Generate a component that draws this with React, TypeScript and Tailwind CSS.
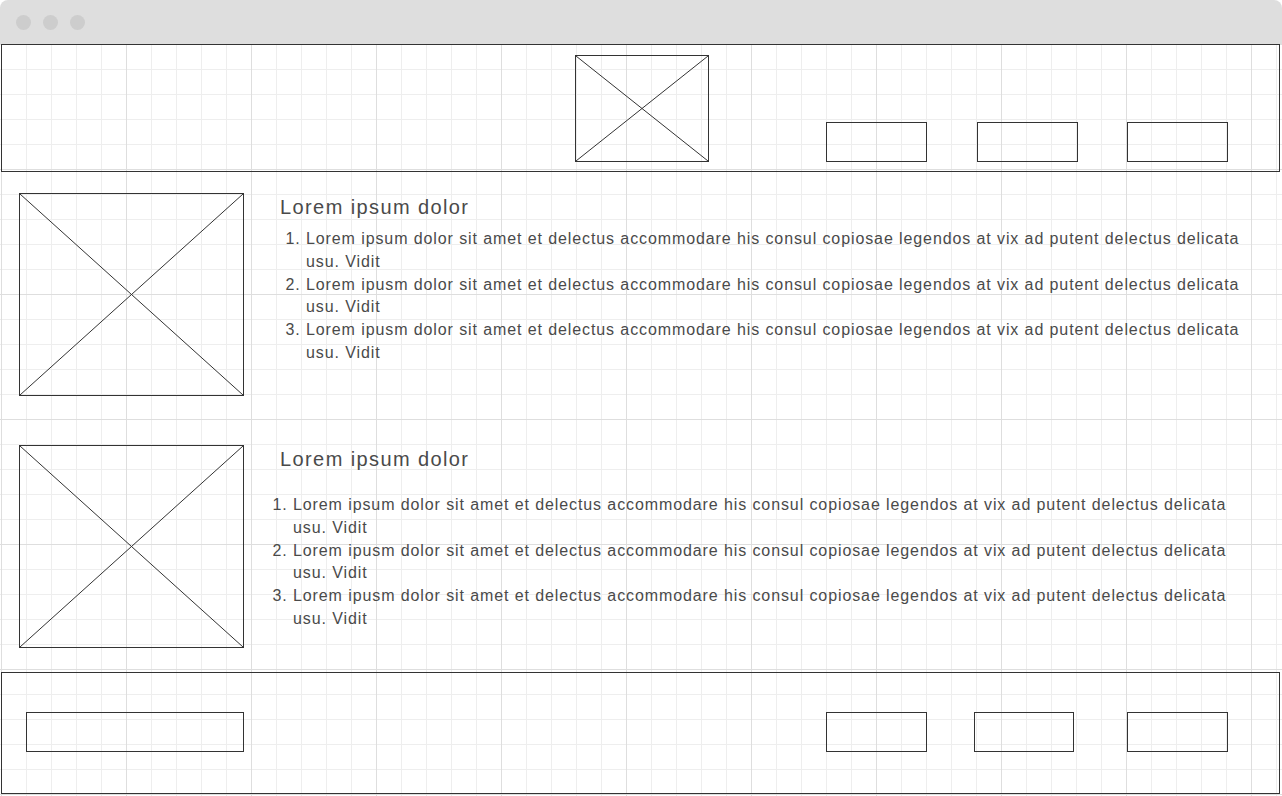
import React from "react";

function Placeholder({ className }: { className: string }) {
  return (
    <div className={"relative border border-[#333333] shrink-0 " + className}>
      <svg className="absolute inset-0 w-full h-full" preserveAspectRatio="none" viewBox="0 0 100 100">
        <line x1="0" y1="0" x2="100" y2="100" stroke="#333" strokeWidth="1" vectorEffect="non-scaling-stroke" />
        <line x1="100" y1="0" x2="0" y2="100" stroke="#333" strokeWidth="1" vectorEffect="non-scaling-stroke" />
      </svg>
    </div>
  );
}

function Box({ className }: { className: string }) {
  return <div className={"border border-[#333333] h-[40px] shrink-0 " + className} />;
}

const ITEMS = [
  "Lorem ipsum dolor sit amet et delectus accommodare his consul copiosae legendos at vix ad putent delectus delicata usu. Vidit",
  "Lorem ipusm dolor sit amet et delectus accommodare his consul copiosae legendos at vix ad putent delectus delicata usu. Vidit",
  "Lorem ipusm dolor sit amet et delectus accommodare his consul copiosae legendos at vix ad putent delectus delicata usu. Vidit",
];

export default function App() {
  return (
    <div className="w-[1282px] h-[796px] bg-white overflow-hidden flex flex-col font-['Liberation_Sans',Arial,sans-serif] text-[#4a4a4a]">
      <div className="h-[44px] shrink-0 bg-[#dedede] rounded-t-[8px] flex items-center pl-[16px] gap-[12px]">
        <div className="w-[15px] h-[15px] rounded-full bg-[#cdcdcd]" />
        <div className="w-[15px] h-[15px] rounded-full bg-[#cdcdcd]" />
        <div className="w-[15px] h-[15px] rounded-full bg-[#cdcdcd]" />
      </div>
      <div className="flex-1 flex flex-col bg-[linear-gradient(to_right,#dedede_1px,transparent_1px),linear-gradient(to_bottom,#dedede_1px,transparent_1px),linear-gradient(to_right,#eeeeee_1px,transparent_1px),linear-gradient(to_bottom,#eeeeee_1px,transparent_1px)] bg-[length:125px_125px,125px_125px,25px_25px,25px_25px] bg-[position:1px_0]">
        <header className="ml-[1px] w-[1279px] h-[128px] shrink-0 border border-[#333333] flex items-end pb-[9px] pl-[573px]">
          <Placeholder className="w-[134px] h-[107px]" />
          <nav className="flex ml-[117px]">
            <Box className="w-[101px]" />
            <Box className="w-[101px] ml-[50px]" />
            <Box className="w-[101px] ml-[49px]" />
          </nav>
        </header>

        <section className="flex items-start pt-[21px] shrink-0">
          <Placeholder className="ml-[19px] w-[225px] h-[203px]" />
          <div className="ml-[36px] w-[990px] pt-[2px]">
            <h2 className="text-[20px] leading-[24px] tracking-[1.4px]">Lorem ipsum dolor</h2>
            <ol className="list-decimal mt-[9px] pl-[26px] w-[975px] text-[16px] leading-[22.75px] tracking-[0.9px]">
              {ITEMS.map((t, i) => (
                <li key={i}>{t}</li>
              ))}
            </ol>
          </div>
        </section>

        <section className="flex items-start mt-[49px] shrink-0">
          <Placeholder className="ml-[19px] w-[225px] h-[203px]" />
          <div className="ml-[36px] w-[990px] pt-[2px]">
            <h2 className="text-[20px] leading-[24px] tracking-[1.4px]">Lorem ipsum dolor</h2>
            <ol className="list-decimal mt-[23px] pl-[13px] w-[963px] text-[16px] leading-[22.75px] tracking-[0.9px]">
              {ITEMS.map((t, i) => (
                <li key={i}>{t}</li>
              ))}
            </ol>
          </div>
        </section>

        <footer className="mt-[24px] ml-[1px] w-[1279px] h-[122px] shrink-0 border border-[#333333] flex items-start pt-[39px] pl-[24px]">
          <Box className="w-[218px]" />
          <Box className="w-[101px] ml-[582px]" />
          <Box className="w-[100px] ml-[47px]" />
          <Box className="w-[101px] ml-[53px]" />
        </footer>
      </div>
    </div>
  );
}
